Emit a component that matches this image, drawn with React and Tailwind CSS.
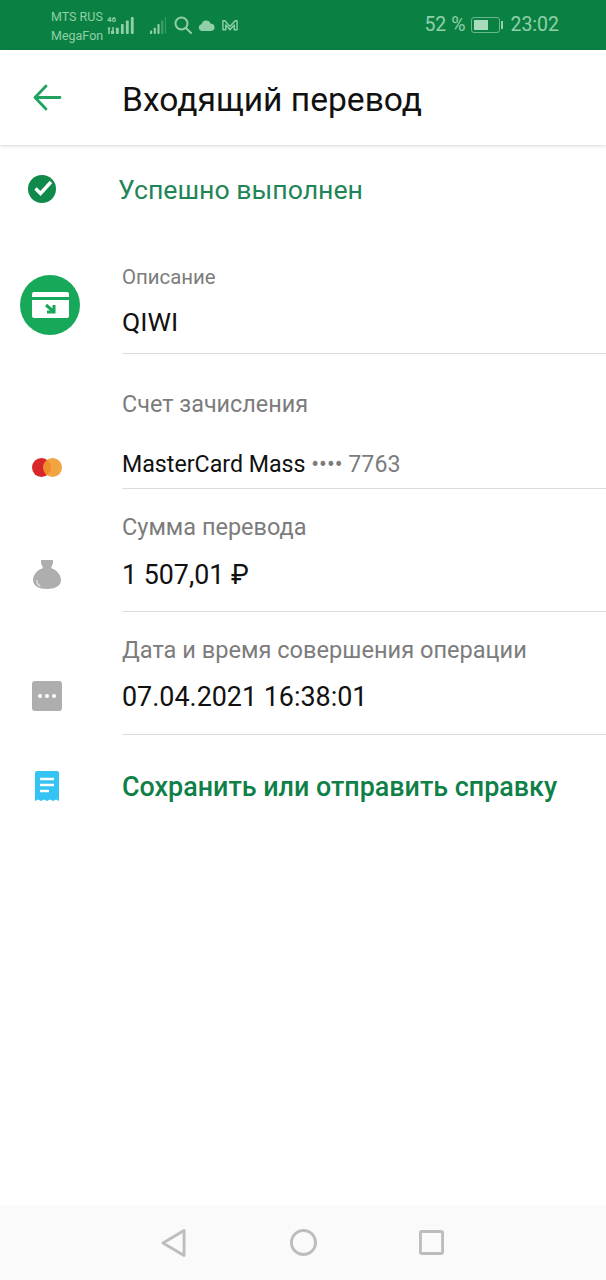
const font = { fontFamily: 'Roboto, sans-serif' };

function SignalBars({ className, faded }) {
  const bars = [5, 9, 14, 19, 24];
  return (
    <svg className={className} viewBox="0 0 29 24" fill="none" preserveAspectRatio="none">
      {bars.map((h, i) => (
        <rect key={i} x={i * 6} y={24 - h} width={faded && i === 4 ? 1.5 : 3.4} height={h} rx="1" fill="#8fd0a8" opacity={faded && i > 2 ? 0.4 : 1} />
      ))}
    </svg>
  );
}

function StatusBar() {
  return (
    <div className="h-[50px] bg-[#0b8043] flex items-center text-[#8fd0a8] shrink-0">
      <div className="ml-[51px] w-[54px] mt-[2px] text-[12.5px] leading-[19px] whitespace-nowrap">
        <div>MTS RUS</div>
        <div>MegaFon</div>
      </div>
      <div className="relative ml-[2px] w-[28px] h-[24px]">
        <span className="absolute left-0 top-[3px] text-[8px] font-bold leading-[8px]">46</span>
        <svg className="absolute left-0 top-[14px] w-[9px] h-[7px]" viewBox="0 0 9 7" fill="none" stroke="#8fd0a8" strokeWidth="1.5">
          <path d="M2 7V1M1 2l1-1 1 1M6 0v6M5 5l1 1 1-1" />
        </svg>
        <SignalBars className="absolute left-[4px] top-[4px] w-[24px] h-[17px]" />
      </div>
      <SignalBars className="ml-[15px] w-[18px] h-[17px] mt-[1px]" faded />
      <svg className="ml-[6px] w-[18px] h-[18px]" viewBox="0 0 18 18" fill="none" stroke="#8fd0a8" strokeWidth="2">
        <circle cx="7.500" cy="7.500" r="6" />
        <path d="M12 12l5 5" strokeLinecap="round" />
      </svg>
      <svg className="ml-[6px] w-[17px] h-[11px]" viewBox="0 0 18 12" fill="#8fd0a8">
        <path d="M4.200 12A3.800 3.800 0 0 1 3.600 4.500 5.200 5.200 0 0 1 13.500 4 4 4 0 0 1 14 12Z" />
      </svg>
      <svg className="ml-[7px] w-[16px] h-[12px]" viewBox="0 0 17 12" fill="none" stroke="#8fd0a8" strokeWidth="1.500">
        <path d="M1 11V1.500h2l5.500 6 5.500-6h2V11h-3V6L8.500 11 4 6v5Z" strokeLinejoin="round" />
      </svg>
      <span className="ml-auto text-[19.500px] leading-none">52 %</span>
      <div className="ml-[6px] flex items-center">
        <div className="w-[29px] h-[16px] rounded-[3px] border border-[#8fd0a8]/70 p-[2px]">
          <div className="w-[14px] h-full bg-[#a9dcbd]" />
        </div>
        <div className="ml-[1px] w-[2px] h-[8px] bg-[#8fd0a8]" />
      </div>
      <span className="ml-[7px] mr-[47px] text-[19.500px] leading-none">23:02</span>
    </div>
  );
}

function Header() {
  return (
    <div className="relative h-[95px] bg-white flex items-center shrink-0 shadow-[0_1px_3px_rgba(0,0,0,0.16)]">
      <svg className="ml-[33px] w-[29px] h-[27px] -mt-[1px]" viewBox="0 0 29 27" fill="none" stroke="#1fa35f" strokeWidth="2.800" strokeLinecap="round" strokeLinejoin="round">
        <path d="M27 13.500H2M13 2 2 13.500 13 25" />
      </svg>
      <h1 className="ml-[60px] mt-[4px] text-[33.600px] leading-none font-normal text-[#111]">Входящий перевод</h1>
    </div>
  );
}

function App() {
  return (
    <div className="w-[606px] h-[1280px] bg-white flex flex-col overflow-hidden" style={font}>
      <StatusBar />
      <Header />

      {/* Status */}
      <div className="flex items-center h-[91px] shrink-0">
        <svg className="ml-[28px] w-[28px] h-[28px] -mt-[4px]" viewBox="0 0 28 28">
          <circle cx="14" cy="14" r="14" fill="#0f8a4a" />
          <path d="M7.500 13.500 12.500 18.500 23 7" fill="none" stroke="#fff" strokeWidth="3.400" />
        </svg>
        <span className="ml-[62px] text-[26.700px] leading-none text-[#1f8557]">Успешно выполнен</span>
      </div>

      {/* Описание */}
      <div className="flex h-[118px] shrink-0">
        <div className="w-[122px] shrink-0 pl-[20px] pt-[39px]">
          <svg className="w-[60px] h-[60px]" viewBox="0 0 60 60">
            <circle cx="30" cy="30" r="30" fill="#18a85a" />
            <rect x="12" y="17" width="37" height="26" rx="2" fill="#fff" />
            <rect x="12" y="22" width="37" height="3" fill="#18a85a" />
            <path d="M26 30 33 36M34 30v7h-7" fill="none" stroke="#18a85a" strokeWidth="3" />
          </svg>
        </div>
        <div className="flex-1 border-b border-[#dcdcdc] pt-[29px]">
          <div className="text-[20.400px] leading-[24px] text-[#7c7c7c]">Описание</div>
          <div className="mt-[18px] text-[26.500px] leading-[30px] text-[#111]">QIWI</div>
        </div>
      </div>

      {/* Счет зачисления */}
      <div className="flex h-[135px] shrink-0">
        <div className="w-[122px] shrink-0 pl-[32px] pt-[104px]">
          <div className="flex w-[31px]">
            <div className="w-[19px] h-[19px] rounded-full bg-[#d9262a]" />
            <div className="-ml-[8px] w-[19px] h-[19px] rounded-full bg-[#f29a2e]/90" />
          </div>
        </div>
        <div className="flex-1 border-b border-[#dcdcdc] pt-[37px]">
          <div className="text-[23.400px] leading-[26px] text-[#7c7c7c]">Счет зачисления</div>
          <div className="mt-[33px] text-[23.200px] leading-[28px] text-[#111]">
            MasterCard Mass <span className="text-[#7c7c7c]">•••• 7763</span>
          </div>
        </div>
      </div>

      {/* Сумма */}
      <div className="flex h-[123px] shrink-0">
        <div className="w-[122px] shrink-0 pl-[33px] pt-[71px]">
          <svg className="w-[28px] h-[29px]" viewBox="0 0 28 29">
            <path d="M8 0h12v3l-2 5c6 2 10 7 10 12 0 6-6 9-14 9S0 26 0 20C0 15 4 10 10 8L8 3Z" fill="#aeaeae" />
            <path d="M4 20c-.5 3 1 5 3.500 6" fill="none" stroke="#e4e4e4" strokeWidth="1.200" />
          </svg>
        </div>
        <div className="flex-1 border-b border-[#dcdcdc] pt-[25px]">
          <div className="text-[23.500px] leading-[26px] text-[#7c7c7c]">Сумма перевода</div>
          <div className="mt-[19px] text-[26.800px] leading-[32px] text-[#111]">1 507,01 ₽</div>
        </div>
      </div>

      {/* Дата */}
      <div className="flex h-[123px] shrink-0">
        <div className="w-[122px] shrink-0 pl-[32px] pt-[69px]">
          <div className="w-[30px] h-[30px] rounded-[3px] bg-[#aeaeae] flex items-center justify-center gap-[3px]">
            <span className="w-[4px] h-[4px] rounded-full bg-white" />
            <span className="w-[4px] h-[4px] rounded-full bg-white" />
            <span className="w-[4px] h-[4px] rounded-full bg-white" />
          </div>
        </div>
        <div className="flex-1 border-b border-[#dcdcdc] pt-[25px]">
          <div className="text-[23.600px] leading-[26px] text-[#7c7c7c]">Дата и время совершения операции</div>
          <div className="mt-[18px] text-[26.900px] leading-[32px] text-[#111]">07.04.2021 16:38:01</div>
        </div>
      </div>

      {/* Справка */}
      <div className="flex items-center h-[105px] shrink-0">
        <svg className="ml-[35px] w-[24px] h-[30px] -mt-[3px]" viewBox="0 0 24 30">
          <path d="M2 0h20a2 2 0 0 1 2 2v28l-3-1.500-3 1.500-3-1.500-3 1.500-3-1.500-3 1.500-3-1.500-3 1.500V2a2 2 0 0 1 2-2Z" fill="#35c3f3" />
          <path d="M5 8h14M5 14h14M5 20h9" stroke="#fff" strokeWidth="2.400" />
        </svg>
        <span className="ml-[63px] text-[26.900px] leading-none font-medium text-[#0f8048] whitespace-nowrap">Сохранить или отправить справку</span>
      </div>

      {/* Nav bar */}
      <div className="mt-auto h-[75px] bg-[#fafafa] flex items-center shrink-0">
        <svg className="ml-[161px] w-[25px] h-[30px]" viewBox="0 0 26 30" fill="none" stroke="#bdbdbd" strokeWidth="3" strokeLinejoin="round">
          <path d="M24 2v26L2 15Z" />
        </svg>
        <svg className="ml-[104px] w-[27px] h-[27px]" viewBox="0 0 28 28" fill="none" stroke="#bdbdbd" strokeWidth="3">
          <circle cx="14" cy="14" r="12.500" />
        </svg>
        <svg className="ml-[102px] w-[25px] h-[25px]" viewBox="0 0 26 26" fill="none" stroke="#bdbdbd" strokeWidth="3">
          <rect x="1.500" y="1.500" width="23" height="23" rx="1.500" />
        </svg>
      </div>
    </div>
  );
}

export default App;
